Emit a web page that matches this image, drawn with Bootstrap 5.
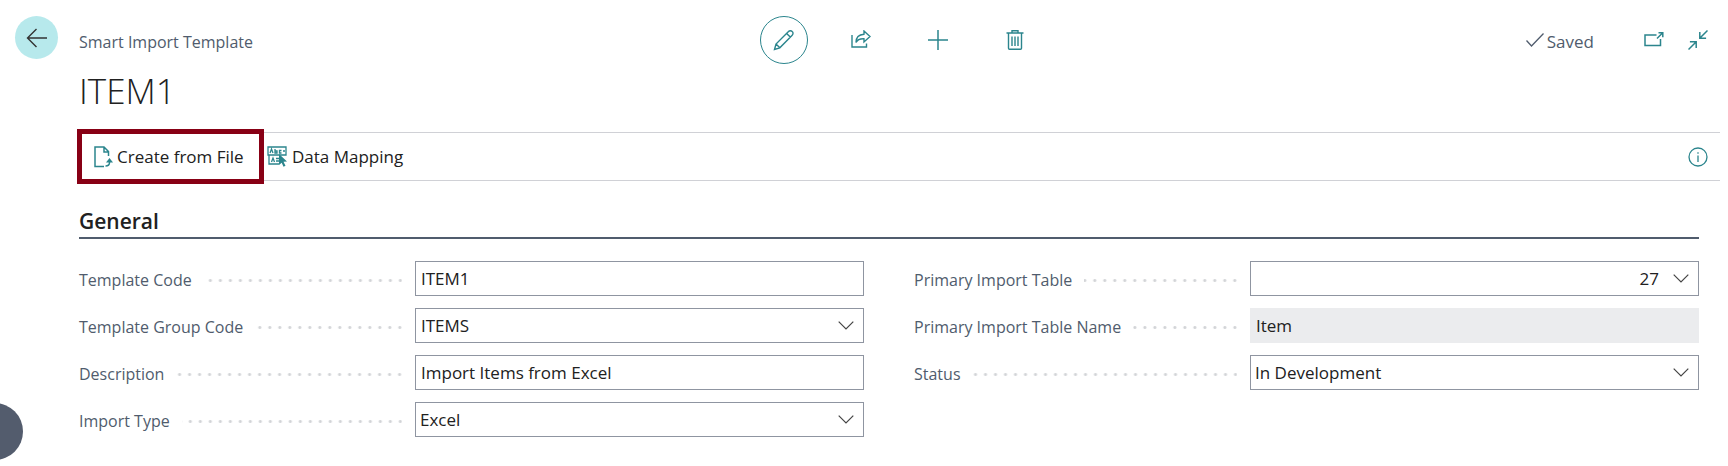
<!DOCTYPE html>
<html lang="en">
<head>
<meta charset="utf-8">
<meta name="viewport" content="width=device-width, initial-scale=1">
<title>Smart Import Template - ITEM1</title>
<link href="https://cdn.jsdelivr.net/npm/bootstrap@5.3.0/dist/css/bootstrap.min.css" rel="stylesheet">
<style>
  :root { --teal: #2b858d; --slate: #505c6d; --ink: #212121; --edge: #8f95a1; }
  body { font-family: "Open Sans", "Noto Sans", sans-serif; font-size: 17px; line-height: 24px; color: var(--ink); background: #fff; }
  svg { display: block; fill: none; stroke: currentColor; }
  .rail { width: 79px; padding: 16px 0 0 15px; }
  .back-btn { width: 43px; height: 43px; background: #b7e9ec; color: #333; }
  .page-main { padding-right: 8px; }
  .topbar { display: grid; grid-template-columns: 1fr auto 1fr; padding-top: 16px; }
  .slate { color: var(--slate); }
  .caption { padding-top: 14px; }
  .page-type { font-size: 16px; }
  .actions { gap: 29px; }
  .round-btn { width: 48px; height: 48px; color: var(--teal); border: 1px solid transparent; }
  .round-btn.active-mode { border-color: var(--teal); }
  .state { gap: 3px; margin-right: 50px; }
  .tool-btn { color: var(--teal); }
  .record-title { font-size: 35px; line-height: 48px; font-weight: 300; margin: 3px 0 17px; }
  .commandbar { border-top: 1px solid #d0d1d6; border-bottom: 1px solid #d0d1d6; height: 49px; padding-right: 12px; }
  .cmd { gap: 4px; color: var(--ink); font-size: 17px; }
  .cmd svg { color: var(--teal); }
  .cmd-marked { border: 5px solid #880015; height: 55px; width: 187px; margin: 0 3px 0 -2px; padding: 0 0 0 12px; white-space: nowrap; }
  .group { padding-right: 21px; }
  .group-title { font-size: 21px; line-height: 32px; font-weight: 600; border-bottom: 2px solid var(--slate); margin: 24px 0 22px; }
  .fields { column-gap: 50px; }
  .fieldcol { flex: 1 1 0; display: grid; row-gap: 12px; align-content: start; min-width: 0; }
  .field { display: grid; grid-template-columns: 336fr 449fr; height: 35px; }
  .name { display: flex; align-items: center; padding: 3px 13px 0 0; color: var(--slate); font-size: 16px; white-space: nowrap; }
  .name::after { content: ""; flex: 1; height: 3px; margin-left: 12px; background: radial-gradient(circle, #d2d4d7 1px, transparent 2px) right center / 10px 3px repeat-x; background-position-x: calc(100% + 3px); }
  .box { display: flex; border: 1px solid var(--edge); background-color: #fff; min-width: 0; }
  .box input { border: 0; background: transparent; padding: 0 5px; flex: 1; min-width: 0; color: var(--ink); }
  .box select { appearance: none; border: 0; background: transparent; flex: 1; padding: 0 4px; margin-right: -34px; color: var(--ink); min-width: 0; }
  .box .chev { width: 34px; padding: 0; border: 0; background: none; color: #444; display: flex; align-items: center; justify-content: center; pointer-events: none; }
  .box button.chev { pointer-events: auto; }
  .box.readonly { background: #ebecee; border-color: #ebecee; }
  .assist { width: 57px; height: 57px; left: -34px; top: 403px; background: #535c6d; }
</style>
</head>
<body>
<button class="assist btn rounded-circle position-absolute border-0 p-0" aria-label="Open help"></button>
<div class="d-flex">
  <div class="rail flex-shrink-0">
    <button class="back-btn btn rounded-circle border-0 p-0 d-flex align-items-center justify-content-center" aria-label="Back">
      <svg width="22" height="20" viewBox="0 0 22 20" stroke-width="1.4"><path d="M21 10H1.500M10.500 1 1.500 10l9 9"/></svg>
    </button>
  </div>
  <main class="page-main flex-grow-1">
    <header class="topbar">
      <div class="caption page-type slate">Smart Import Template</div>
      <div class="actions d-flex">
        <button class="round-btn active-mode btn rounded-circle p-0 d-flex align-items-center justify-content-center" aria-label="Edit">
          <svg width="22" height="22" viewBox="0 0 22 22" stroke-width="1.4"><path d="M1.500 20.500 3 15 15.500 2.500a2.500 2.500 0 0 1 3.700 0 2.500 2.500 0 0 1 0 3.700L6.800 18.800ZM3 15l3.800 3.800M13.600 4.400l3.700 3.700"/></svg>
        </button>
        <button class="round-btn btn rounded-circle p-0 d-flex align-items-center justify-content-center" aria-label="Share">
          <svg width="20" height="20" viewBox="0 0 20 20" stroke-width="1.4"><path d="M1 5v12h14.500v-3.500M13 1l6 5.500L13 12V8.800C9 8.600 6.500 9.500 5 12.500 5 7.500 8 4.500 13 4.200Z"/></svg>
        </button>
        <button class="round-btn btn rounded-circle p-0 d-flex align-items-center justify-content-center" aria-label="New">
          <svg width="20" height="20" viewBox="0 0 20 20" stroke-width="1.5"><path d="M10 0v20M0 10h20"/></svg>
        </button>
        <button class="round-btn btn rounded-circle p-0 d-flex align-items-center justify-content-center" aria-label="Delete">
          <svg width="18" height="20" viewBox="0 0 18 20" stroke-width="1.4"><path d="M0.500 3h17M6 3V.8h6V3M2.500 3v15.200a1 1 0 0 0 1 1h11a1 1 0 0 0 1-1V3M6 6.500v9.500M9 6.500v9.500M12 6.500v9.500"/></svg>
        </button>
      </div>
      <div class="d-flex justify-content-end align-items-start caption">
        <div class="state slate d-flex">
          <svg width="18" height="24" viewBox="0 0 18 24" stroke-width="1.3"><path d="m.5 10.500 5 5.500L17.500 3.500"/></svg>
          <span>Saved</span>
        </div>
        <button class="tool-btn btn border-0 p-0" aria-label="Open in new window">
          <svg width="20" height="20" viewBox="0 0 20 20" stroke-width="1.5"><path d="M12.500 5H1v10.500h15.500V9M13 8.500l5.500-5.500M14.500 2.800h4.300v4.400"/></svg>
        </button>
        <button class="tool-btn btn border-0 p-0 ms-4 me-2 pe-1" aria-label="Collapse page">
          <svg width="20" height="24" viewBox="0 0 20 24" stroke-width="1.500"><path d="M19.500 .5 12 8M11.800 2v6.300h6.300M.5 19.500 8 12M1.900 11.700h6.300V18"/></svg>
        </button>
      </div>
    </header>
    <h1 class="record-title">ITEM1</h1>
    <nav class="commandbar d-flex align-items-center" aria-label="Actions">
      <button class="cmd cmd-marked btn rounded-0 d-flex align-items-center">
        <svg width="19" height="22" viewBox="0 0 19 22" stroke-width="1.500"><path d="M10 20.500H1V1h9l4.500 4.500V10M10 1v5h4.500M11.500 20c3 0 4-1 4-3.500v-2.500"/><path d="m15.500 12 3.500 4.500h-7Z" fill="currentColor" stroke="none"/></svg>
        <span>Create from File</span>
      </button>
      <button class="cmd btn border-0 p-0 d-flex align-items-center">
        <svg width="21" height="21" viewBox="0 0 21 21" stroke-width="1.300"><path d="M1 1h18v8H1zM12 18H2V9M3 7l1.500-4L6 7M8 3v4h2V5H8M14.500 4.500h-2V7h2M16 5h2M4.500 16l1.500-4 1.500 4M9 12.500h3M9 15h3"/><path d="m12 8 8 7.500-3.500.3 2 4-2 1-1.800-4L12 19Z" fill="currentColor" stroke="none"/></svg>
        <span>Data Mapping</span>
      </button>
      <button class="tool-btn btn border-0 p-0 ms-auto" aria-label="Show details">
        <svg width="20" height="20" viewBox="0 0 20 20" stroke-width="1.300"><circle cx="10" cy="10" r="9"/><path d="M10 8.500V15M10 5.200v1.600"/></svg>
      </button>
    </nav>
    <section class="group">
      <h2 class="group-title">General</h2>
      <form class="fields d-flex">
        <div class="fieldcol">
          <div class="field"><label class="name" for="code">Template Code</label><div class="box"><input id="code" type="text" value="ITEM1"></div></div>
          <div class="field"><label class="name" for="grp">Template Group Code</label><div class="box"><input id="grp" type="text" value="ITEMS"><button type="button" class="chev" aria-label="Look up group"><svg width="16" height="9" viewBox="0 0 16 9" stroke-width="1.200"><path d="m.7.7 7.300 7.300L15.300.7"/></svg></button></div></div>
          <div class="field"><label class="name" for="desc">Description</label><div class="box"><input id="desc" type="text" value="Import Items from Excel"></div></div>
          <div class="field"><label class="name" for="type">Import Type</label><div class="box"><select id="type"><option>Excel</option></select><span class="chev"><svg width="16" height="9" viewBox="0 0 16 9" stroke-width="1.200"><path d="m.7.7 7.300 7.300L15.300.7"/></svg></span></div></div>
        </div>
        <div class="fieldcol">
          <div class="field"><label class="name" for="tbl">Primary Import Table</label><div class="box"><input id="tbl" class="text-end" type="text" value="27"><button type="button" class="chev" aria-label="Look up table"><svg width="16" height="9" viewBox="0 0 16 9" stroke-width="1.200"><path d="m.7.7 7.300 7.300L15.300.7"/></svg></button></div></div>
          <div class="field"><label class="name" for="tname">Primary Import Table Name</label><div class="box readonly"><input id="tname" type="text" value="Item" readonly></div></div>
          <div class="field"><label class="name" for="status">Status</label><div class="box"><select id="status"><option>In Development</option></select><span class="chev"><svg width="16" height="9" viewBox="0 0 16 9" stroke-width="1.200"><path d="m.7.7 7.300 7.300L15.300.7"/></svg></span></div></div>
        </div>
      </form>
    </section>
  </main>
</div>
<script src="https://cdn.jsdelivr.net/npm/bootstrap@5.3.0/dist/js/bootstrap.bundle.min.js"></script>
</body>
</html>
